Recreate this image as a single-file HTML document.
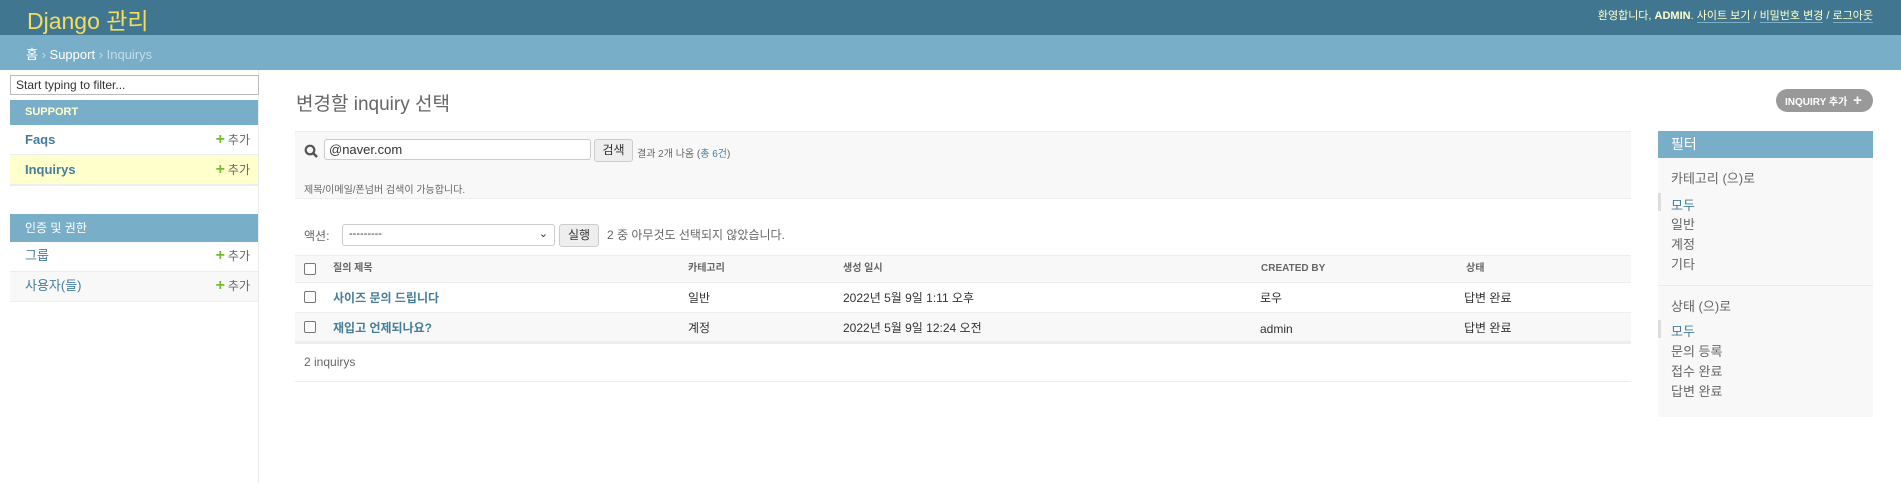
<!DOCTYPE html>
<html><head><meta charset="utf-8"><style>
*{box-sizing:border-box;margin:0;padding:0}
body{width:1901px;height:483px;overflow:hidden;background:#fff;font-family:"Liberation Sans","Noto Sans CJK KR",sans-serif;color:#333;font-size:13px;position:relative}
.a{position:absolute;white-space:nowrap}
#hd{left:0;top:0;width:1901px;height:35px;background:#417690}
#bc{left:0;top:35px;width:1901px;height:35px;background:#79aec8}
a,.lnk{color:#447e9b;text-decoration:none}
.side{left:10px;top:70px;width:249px;height:413px;border-right:1px solid #eee}
.mod{position:absolute;left:0;width:248px;background:#79aec8;color:#fff;font-size:12px;padding-left:15px}
.row{position:absolute;left:0;width:248px;border-bottom:1px solid #eee;font-size:13px;padding-left:15px}
.add{position:absolute;right:8px;color:#666;font-size:12px}
.add b{color:#70bf2b;font-size:16px;margin-right:3px}
.cb{width:12px;height:12px;border:1px solid #777;border-radius:2px;background:#fff}
.th{font-size:10px;color:#666;font-weight:bold;top:255px;height:28px;line-height:28px}
.flt{font-size:13px;color:#666}
</style></head><body>
<div class="a" id="hd"></div>
<div class="a" style="left:27px;top:2px;font-size:23px;color:#f5dd5d">Django 관리</div>
<div class="a" style="right:28px;top:7px;font-size:11px;color:#ffc">환영합니다, <b>ADMIN</b>. <span style="border-bottom:1px solid #79aec8">사이트 보기</span> / <span style="border-bottom:1px solid #79aec8">비밀번호 변경</span> / <span style="border-bottom:1px solid #79aec8">로그아웃</span></div>
<div class="a" id="bc"></div>
<div class="a" style="left:26px;top:44px;font-size:13px;color:#c4dce8"><span style="color:#fff">홈</span> › <span style="color:#fff">Support</span> › Inquirys</div>

<div class="a side"></div>
<div class="a" style="left:10px;top:75px;width:249px;height:20px;border:1px solid #bbb;font-size:12px;color:#333;padding:2px 5px;line-height:14px">Start typing to filter...</div>
<div class="mod" style="top:100px;height:25px;line-height:25px;color:#ffc;font-weight:bold;font-size:11px;left:10px">SUPPORT</div>
<div class="row" style="top:125px;height:30px;line-height:30px;left:10px"><b class="lnk">Faqs</b><span class="add"><b>+</b>추가</span></div>
<div class="row" style="top:155px;height:30px;line-height:30px;left:10px;background:#ffc"><b class="lnk">Inquirys</b><span class="add"><b>+</b>추가</span></div>
<div class="row" style="top:185px;height:1px;left:10px"></div>
<div class="mod" style="top:214px;height:28px;line-height:28px;left:10px">인증 및 권한</div>
<div class="row" style="top:242px;height:30px;line-height:28px;left:10px"><span class="lnk">그룹</span><span class="add"><b>+</b>추가</span></div>
<div class="row" style="top:272px;height:30px;line-height:28px;left:10px;background:#f8f8f8"><span class="lnk">사용자(들)</span><span class="add"><b>+</b>추가</span></div>

<div class="a" style="left:296px;top:89px;font-size:19px;color:#666">변경할 inquiry 선택</div>
<div class="a" style="left:1776px;top:89px;width:97px;height:23px;border-radius:12px;background:#999;color:#fff;font-size:10px;font-weight:bold;line-height:23px;padding-left:9px">INQUIRY 추가 <span style="font-size:15px;margin-left:3px">+</span></div>

<div class="a" style="left:295px;top:131px;width:1336px;height:68px;background:#f8f8f8;border-top:1px solid #eee;border-bottom:1px solid #eee"></div>
<svg class="a" style="left:304px;top:144px" width="14" height="14" viewBox="0 0 14 14"><circle cx="6" cy="6" r="4.3" fill="none" stroke="#555" stroke-width="2.2"/><path d="M9 9l4 4" stroke="#555" stroke-width="2.6"/></svg>
<div class="a" style="left:324px;top:139px;width:267px;height:21px;border:1px solid #ccc;border-radius:3px;background:#fff;font-size:13px;padding:2px 4px">@naver.com</div>
<div class="a" style="left:594px;top:139px;width:39px;height:23px;border:1px solid #ccc;border-radius:3px;background:#eee;font-size:12px;line-height:21px;text-align:center">검색</div>
<div class="a" style="left:637px;top:145px;font-size:10px;color:#666">결과 2개 나옴 (<span class="lnk">총 6건</span>)</div>
<div class="a" style="left:304px;top:181px;font-size:10px;color:#666">제목/이메일/폰넘버 검색이 가능합니다.</div>

<div class="a" style="left:304px;top:227px;font-size:12px;color:#666">액션:</div>
<div class="a" style="left:342px;top:224px;width:213px;height:22px;border:1px solid #ccc;border-radius:3px;background:#fff;font-size:11px;padding:3px 6px">---------<span style="position:absolute;right:6px;top:2px;font-size:11px">⌄</span></div>
<div class="a" style="left:559px;top:224px;width:40px;height:23px;border:1px solid #ccc;border-radius:3px;background:#eee;font-size:12px;line-height:21px;text-align:center">실행</div>
<div class="a" style="left:607px;top:226px;font-size:12px;color:#666">2 중 아무것도 선택되지 않았습니다.</div>

<div class="a" style="left:295px;top:255px;width:1336px;height:28px;background:#f8f8f8;border-top:1px solid #eee;border-bottom:1px solid #eee"></div>
<div class="a cb" style="left:304px;top:263px"></div>
<div class="a th" style="left:333px">질의 제목</div>
<div class="a th" style="left:688px">카테고리</div>
<div class="a th" style="left:843px">생성 일시</div>
<div class="a th" style="left:1261px">CREATED BY</div>
<div class="a th" style="left:1466px">상태</div>
<div class="a" style="left:295px;top:283px;width:1336px;height:30px;border-bottom:1px solid #eee"></div>
<div class="a" style="left:295px;top:313px;width:1336px;height:31px;background:#f8f8f8;border-bottom:3px solid #eee"></div>
<div class="a cb" style="left:304px;top:291px"></div>
<div class="a cb" style="left:304px;top:321px"></div>
<div class="a lnk" style="left:333px;top:289px;font-weight:bold;font-size:12px">사이즈 문의 드립니다</div>
<div class="a lnk" style="left:333px;top:319px;font-weight:bold;font-size:12px">재입고 언제되나요?</div>
<div class="a" style="left:688px;top:289px;font-size:12px">일반</div>
<div class="a" style="left:688px;top:319px;font-size:12px">계정</div>
<div class="a" style="left:843px;top:289px;font-size:12px">2022년 5월 9일 1:11 오후</div>
<div class="a" style="left:843px;top:319px;font-size:12px">2022년 5월 9일 12:24 오전</div>
<div class="a" style="left:1260px;top:289px;font-size:12px">로우</div>
<div class="a" style="left:1260px;top:322px;font-size:12px">admin</div>
<div class="a" style="left:1464px;top:289px;font-size:12px">답변 완료</div>
<div class="a" style="left:1464px;top:319px;font-size:12px">답변 완료</div>
<div class="a" style="left:304px;top:355px;font-size:12px;color:#666">2 inquirys</div>
<div class="a" style="left:295px;top:381px;width:1336px;height:1px;background:#eee"></div>

<div class="a" style="left:1658px;top:131px;width:215px;height:286px;background:#f8f8f8"></div>
<div class="a" style="left:1658px;top:131px;width:215px;height:27px;background:#79aec8;color:#fff;font-size:14px;line-height:27px;padding-left:13px">필터</div>
<div class="a flt" style="left:1671px;top:168px;font-size:13px">카테고리 (으)로</div>
<div class="a" style="left:1658px;top:193px;width:3px;height:18px;background:#ddd"></div>
<div class="a flt" style="left:1671px;top:195px;color:#447e9b">모두</div>
<div class="a flt" style="left:1671px;top:214px">일반</div>
<div class="a flt" style="left:1671px;top:234px">계정</div>
<div class="a flt" style="left:1671px;top:254px">기타</div>
<div class="a" style="left:1658px;top:285px;width:215px;height:1px;background:#eaeaea"></div>
<div class="a flt" style="left:1671px;top:296px">상태 (으)로</div>
<div class="a" style="left:1658px;top:320px;width:3px;height:18px;background:#ddd"></div>
<div class="a flt" style="left:1671px;top:321px;color:#447e9b">모두</div>
<div class="a flt" style="left:1671px;top:341px">문의 등록</div>
<div class="a flt" style="left:1671px;top:361px">접수 완료</div>
<div class="a flt" style="left:1671px;top:381px">답변 완료</div>
</body></html>
